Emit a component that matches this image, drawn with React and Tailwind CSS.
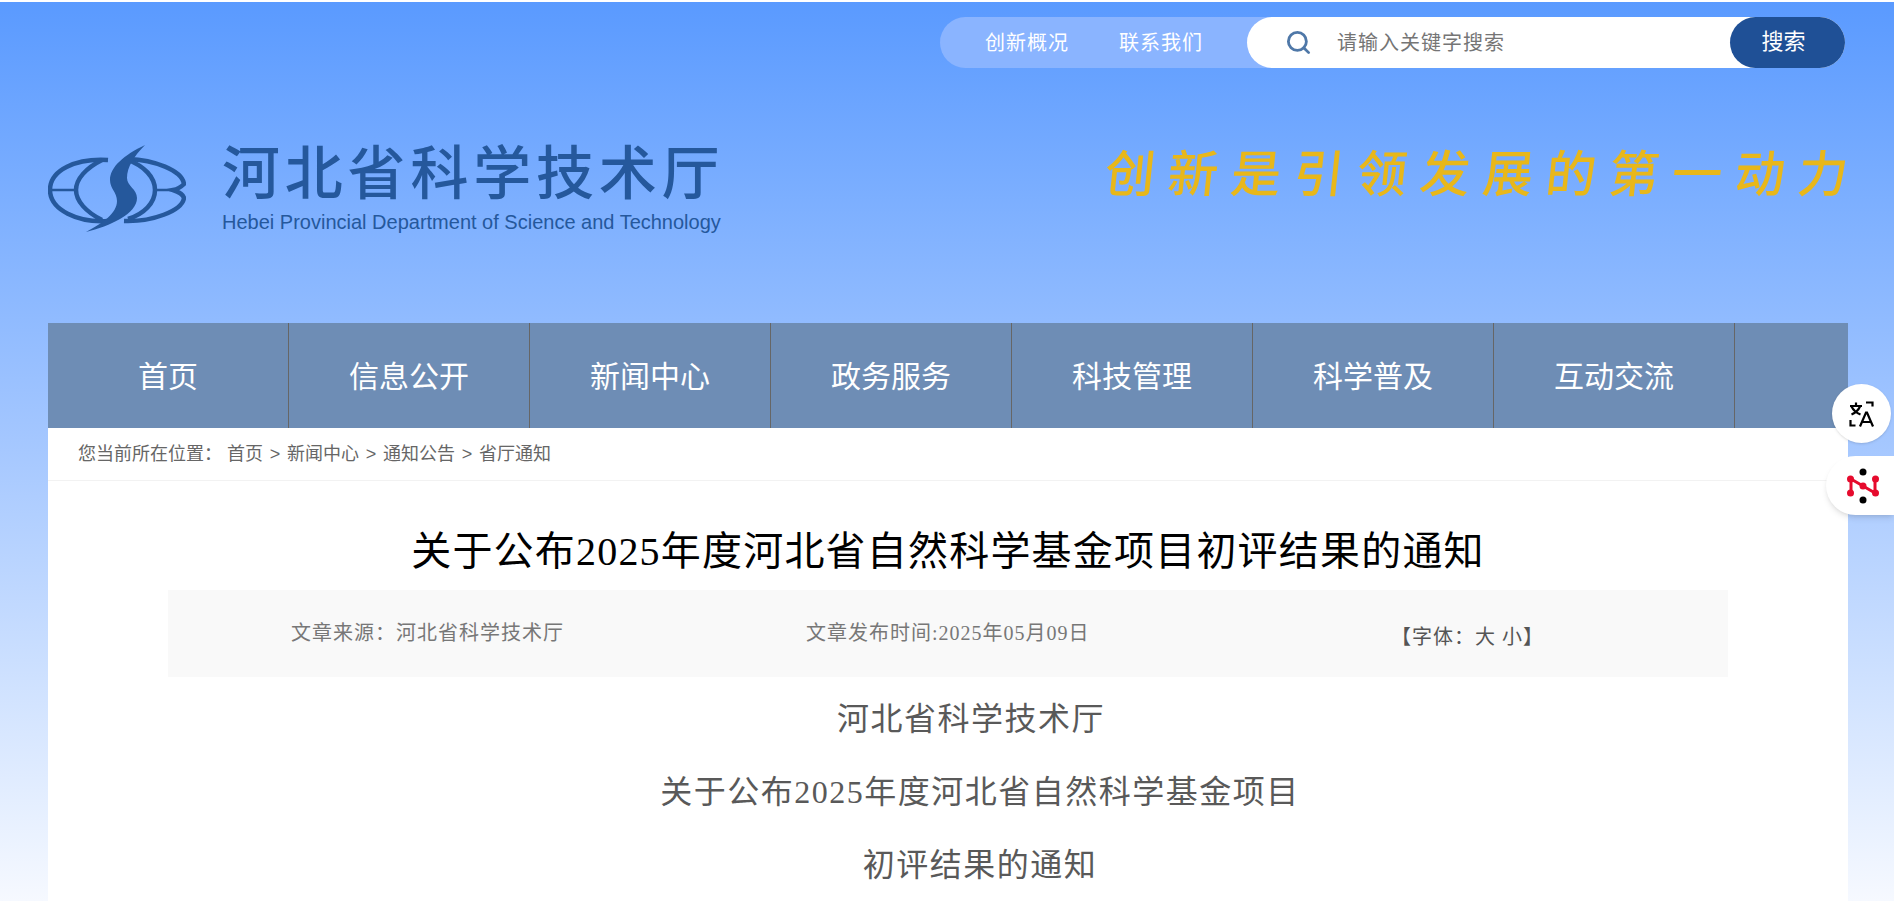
import React from 'react';
import { Search } from 'lucide-react';

const navItems = ['首页', '信息公开', '新闻中心', '政务服务', '科技管理', '科学普及', '互动交流'];
const crumbs = ['首页', '新闻中心', '通知公告', '省厅通知'];
const sans = 'font-["Liberation_Sans","Noto_Sans_CJK_SC",sans-serif]';
const serif = 'font-["Liberation_Serif","Noto_Sans_CJK_SC",serif]';

const Emblem = () => (
    <svg width="138" height="87" viewBox="0 0 138 87" fill="none" className="shrink-0">
        <g stroke="#25589c" strokeWidth="4.5">
            <path d="M60 15C28 13 2 25 2 45c0 20 28 33 58 31" />
            <path d="M80 14c26 1 54 11 56 25-3 3-6 5-11 6 6 2 10 4 11 8-2 13-32 24-60 23" />
            <path d="M54 15C38 23 28 34 28 45c0 11 10 22 26 30" />
            <path d="M80 15c16 6 27 17 27 30 0 13-11 24-27 29" />
            <path d="M2 45h26M107 45h18" strokeWidth="2.5" />
        </g>
        <path
            d="M97 0C76 10 62 22 62 35c0 9 7 12 7 21 0 12-14 22-31 31 24-6 51-18 51-34 0-9-10-12-10-20C79 22 86 11 97 0Z"
            fill="#25589c"
        />
    </svg>
);

const TranslateIcon = () => (
    <svg width="26" height="26" viewBox="0 0 26 26" fill="none" stroke="#000" strokeWidth="2.2">
        <path d="M1 5h12M7 1.500v3.500M2.500 5.500c2 4 5 6.500 9 8M11 5.500c-1.500 3.500-4 6-8.500 8" />
        <path d="M17 1.500h6.500v4M1.500 19v5.500h5" />
        <path d="M11 25.500l6-14h1l6 14M13 21h9.500" />
    </svg>
);

const GraphIcon = () => (
    <svg width="36" height="36" viewBox="0 0 36 36">
        <path d="M6 11v14M6 11l24 14M30 11v14" stroke="#e60b2d" strokeWidth="3" fill="none" />
        <g fill="#e60b2d">
            <circle cx="5.500" cy="11" r="3.500" />
            <circle cx="5.500" cy="25" r="3.500" />
            <circle cx="18" cy="18" r="3.500" />
            <circle cx="30.500" cy="11" r="3.500" />
            <circle cx="30.500" cy="25" r="3.500" />
        </g>
        <circle cx="18" cy="4" r="3.500" fill="#000" />
        <circle cx="18" cy="32" r="3.500" fill="#000" />
    </svg>
);

const App = () => {
    return (
        <div className={`relative h-[901px] overflow-hidden border-t-2 border-white bg-gradient-to-b from-[#5a9aff] via-[#a6c8ff] via-50% to-[#f6f9ff] ${sans}`}>
            {/* Top bar */}
            <div className="flex justify-end pt-[15px] pr-[49px]">
                <div className="flex h-[51px] w-[905px] rounded-full bg-[#8ab4ff]">
                    <div className="flex w-[307px] items-center gap-[50px] pl-[45px] text-[20px] tracking-[1px] text-white">
                        <span>创新概况</span>
                        <span>联系我们</span>
                    </div>
                    <div className="flex flex-1 items-center rounded-full bg-white">
                        <Search className="ml-[38px] h-[27px] w-[27px] text-[#4f78a8]" strokeWidth={2.5} />
                        <span className="ml-[25px] flex-1 text-[20px] tracking-[1px] text-[#757575]">请输入关键字搜索</span>
                        <button className="flex h-full w-[115px] items-center justify-center rounded-full bg-[#1f5096] pr-[8px] pb-[2px] text-[22px] text-white">
                            搜索
                        </button>
                    </div>
                </div>
            </div>

            {/* Logo row */}
            <div className="mt-[77px] flex h-[100px] items-start justify-between pl-[48px] pr-[33px]">
                <div className="flex items-start gap-[36px]">
                    <Emblem />
                    <div className="-mt-[6px] text-[#25589c]">
                        <div className="text-[58px] leading-[70px] font-medium tracking-[4.8px]">河北省科学技术厅</div>
                        <div className="mt-[1px] text-[20px] leading-[24px]">
                            Hebei Provincial Department of Science and Technology
                        </div>
                    </div>
                </div>
                <div className="-skew-x-6 text-[50px] leading-[60px] font-medium tracking-[13px] text-[#e8b71a]">
                    创新是引领发展的第一动力
                </div>
            </div>

            {/* Page body */}
            <div className="mx-[48px] mt-[78px] w-[1800px]">
                <nav className="flex h-[105px] bg-[#6e8db5]">
                    {navItems.map((item) => (
                        <a
                            key={item}
                            className="flex w-[241px] items-center justify-center border-r border-[#666] pt-[2px] text-[30px] text-white"
                        >
                            {item}
                        </a>
                    ))}
                </nav>

                <div className="h-[500px] bg-white">
                    {/* Breadcrumb */}
                    <div className="flex h-[53px] items-center border-b border-[#f2f2f2] pl-[30px] text-[18px] text-[#666]">
                        <span>您当前所在位置：</span>
                        <span className="ml-[5px] flex">
                            {crumbs.map((crumb, i) => (
                                <React.Fragment key={crumb}>
                                    {i > 0 && <span className="w-[24px] text-center">&gt;</span>}
                                    <span>{crumb}</span>
                                </React.Fragment>
                            ))}
                        </span>
                    </div>

                    {/* Article */}
                    <h1 className={`mt-[41px] text-center text-[40px] leading-[60px] font-normal tracking-[1.2px] text-black ${serif}`}>
                        关于公布2025年度河北省自然科学基金项目初评结果的通知
                    </h1>
                    <div className={`mx-[120px] mt-[8px] flex h-[87px] bg-[#f9f9f9] text-[20px] tracking-[1px] text-[#777] ${serif}`}>
                        <span className="ml-[123px] mt-[28px] w-[515px]">文章来源：河北省科学技术厅</span>
                        <span className="mt-[28px] w-[585px]">文章发布时间:2025年05月09日</span>
                        <span className="mt-[32px] text-[20px] text-[#555]">【字体：大 小】</span>
                    </div>
                    <div className={`mx-[120px] mt-[6px] text-center text-[32px] leading-[73px] tracking-[1.500px] text-[#595959] ${serif}`}>
                        <p className="indent-[46px]">河北省科学技术厅</p>
                        <p className="indent-[64px]">关于公布2025年度河北省自然科学基金项目</p>
                        <p className="indent-[64px]">初评结果的通知</p>
                    </div>
                </div>
            </div>

            {/* Floating buttons */}
            <div className="absolute top-[382px] left-[1832px] flex h-[59px] w-[59px] items-center justify-center rounded-full bg-white shadow-sm">
                <TranslateIcon />
            </div>
            <div className="absolute top-[454px] left-[1826px] flex h-[59px] w-[68px] items-center rounded-l-full bg-white pl-[19px] shadow-md">
                <GraphIcon />
            </div>
        </div>
    );
};

export default App;
